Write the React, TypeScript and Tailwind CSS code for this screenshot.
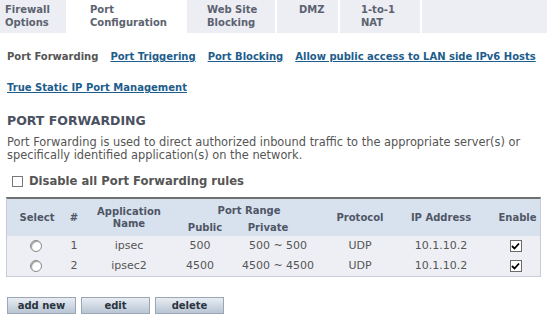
import React from 'react';

const tabs = [
  { top: 'Firewall', bottom: 'Options', w: 'w-[68px]', pl: 'pl-[5px]' },
  { top: 'Port', bottom: 'Configuration', w: 'w-[119px]', pl: 'pl-[22px]', active: true },
  { top: 'Web Site', bottom: 'Blocking', w: 'w-[90px]', pl: 'pl-[20px]' },
  { top: 'DMZ', bottom: '', w: 'w-[63px]', pl: 'pl-[22px]' },
  { top: '1-to-1', bottom: 'NAT', w: 'w-[82px]', pl: 'pl-[21px]' },
];

const rules = [
  { n: 1, name: 'ipsec', pub: '500', priv: '500 ~ 500', proto: 'UDP', ip: '10.1.10.2' },
  { n: 2, name: 'ipsec2', pub: '4500', priv: '4500 ~ 4500', proto: 'UDP', ip: '10.1.10.2' },
];

function Radio() {
  return (
    <span className="inline-block align-middle w-[12px] h-[12px] rounded-full border border-[#8a8a8a] bg-white shadow-[inset_1px_1px_1px_#999]" />
  );
}

function Check() {
  return (
    <span className="inline-flex align-middle items-center justify-center w-[12px] h-[12px] border border-[#6b6b6b] bg-white">
      <svg width="9" height="9" viewBox="0 0 9 9">
        <path d="M1 4 L3.5 6.5 L8 1.5" stroke="#000" strokeWidth="1.8" fill="none" />
      </svg>
    </span>
  );
}

function Btn({ label }: { label: string }) {
  return (
    <button className="w-[69px] h-[17px] border border-[#9aa6b4] bg-gradient-to-b from-[#e8edf4] to-[#b8c5d3] text-[10px] font-bold text-[#2a3440] leading-[15px]">
      {label}
    </button>
  );
}

export default function App() {
  return (
    <div className="w-[547px] h-[322px] bg-white text-[#555] overflow-hidden" style={{ fontFamily: '"DejaVu Sans", Verdana, sans-serif' }}>
      {/* tabs */}
      <div className="flex h-[33px] bg-[#eceef4]">
        {tabs.map((t) => (
          <div
            key={t.top}
            className={`${t.w} ${t.pl} pt-[4px] text-[10px] font-bold leading-[12px] border-r-2 border-white text-[#5c6270] ${t.active ? 'bg-white' : ''}`}
          >
            <div>{t.top}</div>
            <div className="mt-[1px]">{t.bottom}</div>
          </div>
        ))}
      </div>

      {/* sub nav */}
      <div className="px-[7px] pt-[17px] text-[10px] font-bold leading-[13px] whitespace-nowrap">
        <div className="flex gap-[12px]">
          <span className="text-[#555]">Port Forwarding</span>
          <a className="text-[#1d5d8c] underline">Port Triggering</a>
          <a className="text-[#1d5d8c] underline">Port Blocking</a>
          <a className="text-[#1d5d8c] underline">Allow public access to LAN side IPv6 Hosts</a>
        </div>
        <div className="mt-[18px]">
          <a className="text-[#1d5d8c] underline">True Static IP Port Management</a>
        </div>
      </div>

      <div className="px-[7px] pt-[19px]">
        <div className="text-[12.5px] font-bold text-[#4b5160] leading-[15px]">PORT FORWARDING</div>
        <p className="text-[11.4px] leading-[13px] text-[#555] mt-[8px]">
          Port Forwarding is used to direct authorized inbound traffic to the appropriate server(s) or
          specifically identified application(s) on the network.
        </p>
        <label className="flex items-center gap-[6px] mt-[11px] pl-[5px] text-[11.6px] font-bold text-[#555]">
          <span className="inline-block w-[11px] h-[11px] border border-[#777] bg-white" />
          Disable all Port Forwarding rules
        </label>
      </div>

      {/* table */}
      <div className="mx-[6px] mt-[7px] w-[535px] border-t-2 border-[#6f6f6f] border-x border-b border-x-[#c8ccd6] border-b-[#c8ccd6]">
        <table className="w-full table-fixed border-collapse whitespace-nowrap">
          <colgroup>
            <col className="w-[60px]" />
            <col className="w-[14px]" />
            <col className="w-[96px]" />
            <col className="w-[46px]" />
            <col className="w-[110px]" />
            <col className="w-[54px]" />
            <col className="w-[108px]" />
            <col />
          </colgroup>
          <thead className="text-[10px]">
            <tr className="bg-[#d8e2ef] text-[#4f5666]">
              <th rowSpan={2} className="font-bold">Select</th>
              <th rowSpan={2} className="font-bold">#</th>
              <th rowSpan={2} className="font-bold leading-[12px]">Application<br />Name</th>
              <th colSpan={2} className="h-[19px] pt-[3px] pr-[12px] font-bold">Port Range</th>
              <th rowSpan={2} className="font-bold">Protocol</th>
              <th rowSpan={2} className="font-bold">IP Address</th>
              <th rowSpan={2} className="font-bold">Enable</th>
            </tr>
            <tr className="bg-[#d8e2ef] text-[#4f5666]">
              <th className="h-[18px] pl-[10px] font-bold">Public</th>
              <th className="pr-[20px] font-bold">Private</th>
            </tr>
          </thead>
          <tbody className="text-[11px] text-[#555]">
            {rules.map((r) => (
              <tr key={r.n} className="bg-[#eeeff4] h-[20px] text-center">
                <td className="pr-[2px]"><Radio /></td>
                <td>{r.n}</td>
                <td>{r.name}</td>
                <td>{r.pub}</td>
                <td>{r.priv}</td>
                <td>{r.proto}</td>
                <td>{r.ip}</td>
                <td className="pr-[4px]"><Check /></td>
              </tr>
            ))}
          </tbody>
        </table>
      </div>

      <div className="flex gap-[5px] px-[7px] mt-[20px]">
        <Btn label="add new" />
        <Btn label="edit" />
        <Btn label="delete" />
      </div>
    </div>
  );
}
